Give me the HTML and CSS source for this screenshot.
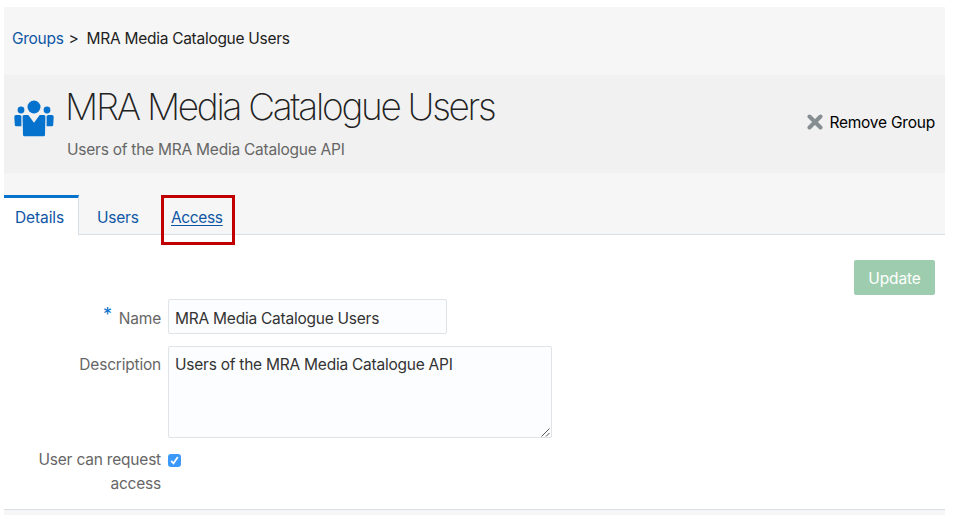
FILE: index.html
```html
<!DOCTYPE html>
<html lang="en">
<head>
<meta charset="utf-8">
<title>MRA Media Catalogue Users</title>
<link rel="stylesheet" href="styles.css">
</head>
<body>
<main class="page">
  <nav class="crumbs"><a href="#">Groups</a><span class="sep">&gt;</span><span class="current">MRA Media Catalogue Users</span></nav>
  <header class="banner">
    <svg class="group-icon" viewBox="0 0 40 37" width="40" height="37" fill="#0572ce">
      <circle cx="20" cy="7" r="6.5"/>
      <circle cx="7" cy="10" r="3.4"/>
      <circle cx="33" cy="10" r="3.4"/>
      <path d="M2 15H6L7.400 16V26.200H2.200Q.9 26.200.8 25L.3 17Q.3 15 2 15Z"/>
      <path d="M38 15H34L32.600 16V26.200H37.800Q39.100 26.200 39.200 25L39.700 17Q39.700 15 38 15Z"/>
      <path d="M10 15H14.300L20 22.800 25.700 15H30Q31.500 15 31.400 16.700L31 34.800Q31 36.300 29.500 36.300H10.500Q9 36.300 9 34.800L8.600 16.700Q8.500 15 10 15Z"/>
    </svg>
    <div class="heading">
      <h1>MRA Media Catalogue Users</h1>
      <p>Users of the MRA Media Catalogue API</p>
    </div>
    <button class="remove" type="button">
      <svg viewBox="0 0 16 16" width="16" height="16" fill="none" stroke="#868e92" stroke-width="4" stroke-linecap="round"><path d="M2.500 2.500 13.500 13.500M13.500 2.500 2.500 13.500"/></svg>
      <span>Remove Group</span>
    </button>
  </header>
  <nav class="tabs">
    <a class="tab active" href="#">Details</a>
    <a class="tab users" href="#">Users</a>
    <a class="tab access" href="#">Access</a>
  </nav>
  <form class="details">
    <div class="actions"><button class="update" type="button">Update</button></div>
    <div class="row name-row">
      <label for="name"><span class="required">*</span>Name</label>
      <input id="name" class="field" type="text" value="MRA Media Catalogue Users">
    </div>
    <div class="row description-row">
      <label for="description">Description</label>
      <div class="area-wrap">
        <textarea id="description" class="field">Users of the MRA Media Catalogue API</textarea>
        <svg class="grip" viewBox="0 0 9 9" width="9" height="9" fill="none" stroke="#555"><path d="M.5 8.500 8.500.5M5 8.500 8.500 5"/></svg>
      </div>
    </div>
    <div class="row request-row">
      <label for="request">User can request access</label>
      <span class="check"><input id="request" type="checkbox" checked><svg viewBox="0 0 13 13" width="13" height="13" fill="none" stroke="#fff" stroke-width="1.700"><path d="M3.200 6.800 5.500 9.300 9.800 3"/></svg></span>
    </div>
  </form>
  <div class="foot"></div>
</main>
</body>
</html>
```

FILE: styles.css
```css
* { box-sizing: border-box; }
body {
  margin: 0;
  background: #fff;
  color: #222;
  font: 15.5px/24px Inter, "Liberation Sans", sans-serif;
  letter-spacing: -0.24px;
}
a { color: #0f56a5; text-decoration: none; }
button { font: inherit; letter-spacing: inherit; border: 0; }
.page {
  width: 941px;
  height: 508px;
  margin: 7px 0 0 4px;
  display: flex;
  flex-direction: column;
  background: #f6f6f6;
}
.crumbs { height: 68px; padding: 20px 8px 0; display: flex; white-space: nowrap; letter-spacing: -0.28px; }
.sep { margin: 0 8px 0 5px; }
.banner {
  height: 98px;
  display: flex;
  align-items: flex-start;
  padding: 0 10px 0 10px;
  background: #f1f1f1;
}
.group-icon { margin-top: 25px; flex: none; }
.heading { margin-left: 13px; flex: 1; white-space: nowrap; }
h1 {
  margin: 9px 0 0 -2px;
  font-size: 37px;
  line-height: 46px;
  font-weight: 200;
  letter-spacing: -2.28px;
}
p { margin: 8px 0 0; color: #666; }
.remove {
  display: flex;
  align-items: center;
  gap: 6px;
  margin-top: 35px;
  padding: 0;
  background: none;
  color: #000;
  white-space: nowrap;
}
.remove svg { margin-top: -2px; }
.remove span { padding-top: 1px; letter-spacing: -0.22px; }
.tabs {
  height: 62px;
  padding-top: 22px;
  display: flex;
  border-bottom: 1px solid #d6dfe6;
}
.tab { height: 39px; padding-top: 11px; }
.tab.active {
  width: 75px;
  height: 40px;
  padding: 8px 0 0 11px;
  border-top: 3px solid #0572ce;
  border-right: 1px solid #d6dfe6;
  background: #fff;
  letter-spacing: -0.1px;
}
.tab.users { width: 82px; padding-left: 18px; }
.tab.access {
  position: relative;
  width: 74px;
  height: 50px;
  padding: 8px 0 0 7px;
  border: 3px solid #c00000;
  text-decoration: underline;
  text-underline-offset: 2px;
  letter-spacing: -0.35px;
}
.details { height: 274px; background: #fff; display: flex; flex-direction: column; }
.actions { height: 64px; padding: 25px 10px 0; text-align: right; }
.update {
  width: 81px;
  height: 35px;
  padding: 2px 0 0;
  border-radius: 2px;
  background: #9dcdae;
  color: #fff;
  letter-spacing: -0.1px;
}
.row { display: flex; }
label { width: 157px; margin-right: 7px; text-align: right; color: #666; letter-spacing: -0.2px; }
.name-row { height: 47px; }
.name-row label { padding-top: 8px; }
.required { color: #0572ce; font-size: 18px; margin-right: 7px; position: relative; top: -3px; line-height: 1; }
.field {
  display: block;
  margin: 0;
  padding: 0 6px;
  border: 1px solid #dfe4e7;
  border-radius: 2px;
  background: #fcfdfe;
  color: #333;
  font: inherit;
  letter-spacing: inherit;
  resize: none;
  outline: 0;
}
input.field { width: 279px; height: 35px; padding-top: 3px; }
.description-row { height: 102px; }
.description-row label { padding-top: 7px; }
.area-wrap { position: relative; }
textarea.field { width: 384px; height: 92px; padding-top: 6px; overflow: hidden; }
.grip { position: absolute; right: 2px; bottom: 11px; }
.request-row label { line-height: 24px; }
.check { position: relative; width: 13px; height: 13px; margin-top: 6px; }
.check input { appearance: none; display: block; width: 13px; height: 13px; margin: 0; border-radius: 3px; background: #3b99fc; }
.check svg { position: absolute; left: 0; top: 0; }
.foot { height: 6px; border-top: 1px solid #d9dfe4; }
```
